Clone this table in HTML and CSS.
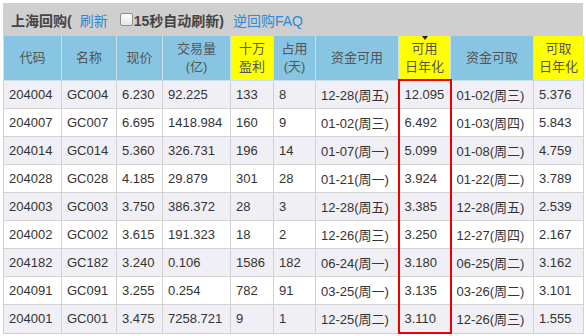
FILE: index.html
```html
<!DOCTYPE html>
<html lang="zh">
<head>
<meta charset="utf-8">
<title>上海回购</title>
<link rel="stylesheet" href="styles.css">
</head>
<body>
<div class="wrap">
  <div class="bar">
    <span class="title">上海回购(</span>
    <a class="link refresh">刷新</a>
    <label class="auto"><span class="check"></span><span class="title">15秒自动刷新)</span></label>
    <a class="link">逆回购FAQ</a>
  </div>
  <table class="grid">
    <colgroup>
      <col class="c1"><col class="c2"><col class="c3"><col class="c4"><col class="c5">
      <col class="c6"><col class="c7"><col class="c8"><col class="c9"><col class="c10">
    </colgroup>
    <thead>
      <tr>
        <th>代码</th>
        <th>名称</th>
        <th>现价</th>
        <th>交易量<br>(亿)</th>
        <th class="hl">十万<br>盈利</th>
        <th>占用<br>(天)</th>
        <th>资金可用</th>
        <th class="hl sorted">可用<br>日年化</th>
        <th>资金可取</th>
        <th class="hl">可取<br>日年化</th>
      </tr>
    </thead>
    <tbody>
      <tr><td>204004</td><td>GC004</td><td>6.230</td><td>92.225</td><td>133</td><td>8</td><td>12-28(周五)</td><td class="red">12.095</td><td>01-02(周三)</td><td>5.376</td></tr>
      <tr><td>204007</td><td>GC007</td><td>6.695</td><td>1418.984</td><td>160</td><td>9</td><td>01-02(周三)</td><td class="red">6.492</td><td>01-03(周四)</td><td>5.843</td></tr>
      <tr><td>204014</td><td>GC014</td><td>5.360</td><td>326.731</td><td>196</td><td>14</td><td>01-07(周一)</td><td class="red">5.099</td><td>01-08(周二)</td><td>4.759</td></tr>
      <tr><td>204028</td><td>GC028</td><td>4.185</td><td>29.879</td><td>301</td><td>28</td><td>01-21(周一)</td><td class="red">3.924</td><td>01-22(周二)</td><td>3.789</td></tr>
      <tr><td>204003</td><td>GC003</td><td>3.750</td><td>386.372</td><td>28</td><td>3</td><td>12-28(周五)</td><td class="red">3.385</td><td>12-28(周五)</td><td>2.539</td></tr>
      <tr><td>204002</td><td>GC002</td><td>3.615</td><td>191.323</td><td>18</td><td>2</td><td>12-26(周三)</td><td class="red">3.250</td><td>12-27(周四)</td><td>2.167</td></tr>
      <tr><td>204182</td><td>GC182</td><td>3.240</td><td>0.106</td><td>1586</td><td>182</td><td>06-24(周一)</td><td class="red">3.180</td><td>06-25(周二)</td><td>3.162</td></tr>
      <tr><td>204091</td><td>GC091</td><td>3.255</td><td>0.254</td><td>782</td><td>91</td><td>03-25(周一)</td><td class="red">3.135</td><td>03-26(周二)</td><td>3.101</td></tr>
      <tr><td>204001</td><td>GC001</td><td>3.475</td><td>7258.721</td><td>9</td><td>1</td><td>12-25(周二)</td><td class="red last">3.110</td><td>12-26(周三)</td><td>1.555</td></tr>
    </tbody>
  </table>
</div>
</body>
</html>
```

FILE: styles.css
```css
html, body {
  margin: 0;
  padding: 0;
  background: #ffffff;
}

body {
  font-family: "Liberation Sans", Arial, "Noto Sans CJK SC", sans-serif;
  color: #333333;
}

.wrap {
  margin: 3px 0 0 3px;
  width: 580px;
  background: #cfcfcf;
}

.bar {
  height: 33px;
  display: flex;
  align-items: center;
  padding-left: 8px;
  font-size: 14px;
  box-sizing: border-box;
}

.title {
  font-weight: bold;
  color: #444444;
}

.link {
  color: #2a8ad4;
  cursor: pointer;
}

.refresh {
  margin-left: 8px;
}

.auto {
  display: flex;
  align-items: center;
  margin-left: 12px;
  margin-right: 9px;
}

.check {
  display: inline-block;
  width: 11px;
  height: 11px;
  border: 1px solid #8f8f8f;
  border-radius: 2px;
  background: linear-gradient(#fdfdfd, #e6e6e6);
  margin-right: 1px;
}

.grid {
  width: 580px;
  border-collapse: collapse;
  table-layout: fixed;
  font-size: 13px;
  background: #ffffff;
}

.c1 { width: 58px; }
.c2 { width: 55px; }
.c3 { width: 46px; }
.c4 { width: 68px; }
.c5 { width: 43px; }
.c6 { width: 42px; }
.c7 { width: 83px; }
.c8 { width: 52px; }
.c9 { width: 83px; }
.c10 { width: 50px; }

.grid th {
  height: 43px;
  padding: 0;
  background: #87c5e3;
  color: #555555;
  font-weight: normal;
  line-height: 18px;
  text-align: center;
  vertical-align: middle;
  border: 1px solid #c9dfea;
  border-top: none;
}

.grid th.hl {
  background: #ffff00;
}

.grid th.sorted {
  position: relative;
}

.grid th.sorted::before {
  content: "";
  position: absolute;
  top: 0;
  left: 50%;
  margin-left: -3px;
  border-left: 3px solid transparent;
  border-right: 3px solid transparent;
  border-top: 4px solid #222222;
}

.grid td {
  height: 27px;
  padding: 0 0 0 5px;
  border: 1px solid #d2d2d2;
  white-space: nowrap;
  color: #333333;
}

.grid tbody tr:nth-child(odd) td {
  background: #efeff5;
}

.grid td.red {
  border-left: 2px solid #ee0000;
  border-right: 2px solid #ee0000;
}

.grid tbody tr:first-child td.red {
  border-top: 2px solid #ee0000;
}

.grid td.red.last {
  border-bottom: 2px solid #ee0000;
}
```
